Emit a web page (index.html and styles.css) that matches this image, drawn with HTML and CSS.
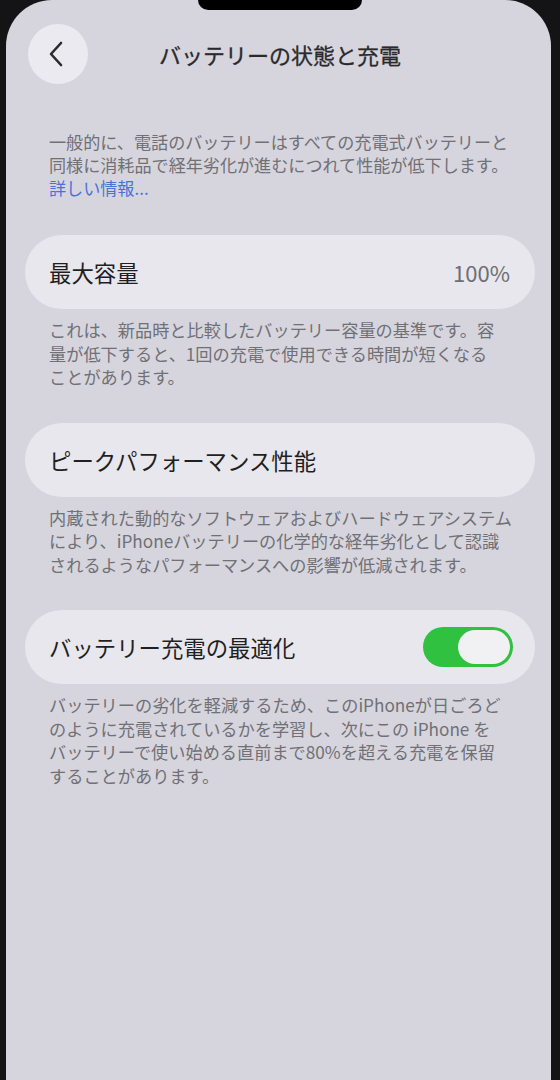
FILE: index.html
```html
<!DOCTYPE html>
<html lang="ja">
<head>
  <meta charset="UTF-8" />
  <title>バッテリーの状態と充電</title>
  <link rel="stylesheet" href="styles.css">
</head>
<body>
  <div class="screen">
    <div class="notch"></div>

    <!-- Header -->
    <header class="nav">
      <button class="back" aria-label="戻る">
        <svg width="16" height="26" viewBox="0 0 16 26">
          <path d="M13 2 L3 13 L13 24" fill="none" stroke="#2b2b2e" stroke-width="2.6" stroke-linecap="round" stroke-linejoin="round"/>
        </svg>
      </button>
      <h1 class="nav-title">バッテリーの状態と充電</h1>
      <span></span>
    </header>

    <p class="intro">
      一般的に、電話のバッテリーはすべての充電式バッテリーと<br>
      同様に消耗品で経年劣化が進むにつれて性能が低下します。<br>
      <a class="more">詳しい情報...</a>
    </p>

    <!-- Maximum capacity -->
    <div class="card">
      <span class="card-label">最大容量</span>
      <span class="card-value">100%</span>
    </div>
    <p class="note">
      これは、新品時と比較したバッテリー容量の基準です。容<br>
      量が低下すると、1回の充電で使用できる時間が短くなる<br>
      ことがあります。
    </p>

    <!-- Peak performance -->
    <div class="card">
      <span class="card-label">ピークパフォーマンス性能</span>
    </div>
    <p class="note">
      内蔵された動的なソフトウェアおよびハードウェアシステム<br>
      により、iPhoneバッテリーの化学的な経年劣化として認識<br>
      されるようなパフォーマンスへの影響が低減されます。
    </p>

    <!-- Optimized charging -->
    <div class="card">
      <span class="card-label">バッテリー充電の最適化</span>
      <span class="toggle on"><span class="knob"></span></span>
    </div>
    <p class="note">
      バッテリーの劣化を軽減するため、このiPhoneが日ごろど<br>
      のように充電されているかを学習し、次にこの iPhone を<br>
      バッテリーで使い始める直前まで80%を超える充電を保留<br>
      することがあります。
    </p>
  </div>
</body>
</html>
```

FILE: styles.css
```css
html, body {
  margin: 0;
  padding: 0;
  height: 100%;
}

body {
  background-color: #141416;
  font-family: "Noto Sans CJK JP", "Noto Sans", sans-serif;
  overflow: hidden;
}

.screen {
  position: relative;
  box-sizing: border-box;
  width: 545px;
  height: 1080px;
  margin-left: 6px;
  padding: 24px 16px 0 19px;
  background-color: #d6d5de;
  border-radius: 46px 46px 0 0;
}

.notch {
  position: absolute;
  top: 0;
  left: 192px;
  width: 164px;
  height: 10px;
  background-color: #000;
  border-radius: 0 0 14px 14px;
}

.nav {
  display: grid;
  grid-template-columns: 66px 1fr 66px;
  align-items: center;
  height: 60px;
}

.back {
  display: flex;
  align-items: center;
  justify-content: center;
  width: 60px;
  height: 60px;
  margin-left: 3px;
  padding: 0 4px 0 0;
  border: none;
  border-radius: 50%;
  background-color: #ebeaf0;
}

.nav-title {
  margin: 0;
  text-align: center;
  font-size: 22px;
  font-weight: 400;
  color: #2a2a2d;
  -webkit-text-stroke: 0.3px #2a2a2d;
}

.intro {
  margin: 46px 0 0 24px;
  font-size: 17.1px;
  line-height: 23px;
  color: #707075;
}

.more {
  color: #4a72d6;
}

.card {
  display: flex;
  align-items: center;
  justify-content: space-between;
  height: 74px;
  margin-top: 34px;
  padding: 0 25px 0 24px;
  background-color: #e8e7ed;
  border-radius: 37px;
}

.intro + .card {
  margin-top: 36px;
}

.card-label {
  font-size: 22.4px;
  font-weight: 400;
  color: #1f1f22;
}

.card-value {
  font-size: 22px;
  color: #6e6e73;
}

.note {
  margin: 9px 0 0 24px;
  font-size: 17.2px;
  line-height: 23.5px;
  color: #707075;
}

.toggle {
  position: relative;
  width: 90px;
  height: 40px;
  margin-right: -3px;
  border-radius: 20px;
  background-color: #2fc13f;
}

.toggle .knob {
  position: absolute;
  top: 3px;
  right: 3px;
  width: 52px;
  height: 34px;
  border-radius: 17px;
  background-color: #f1f1f3;
}
```
